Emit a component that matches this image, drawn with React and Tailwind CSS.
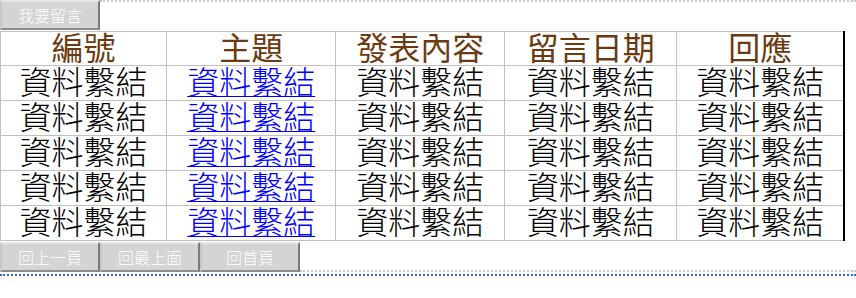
const font = { fontFamily: '"Liberation Serif", "Noto Sans CJK TC", serif' }

const headers = ['編號', '主題', '發表內容', '留言日期', '回應']
const widths = ['w-[166px]', 'w-[169px]', 'w-[169px]', 'w-[172px]', 'w-[167px]']
const rows = [1, 2, 3, 4, 5]

function GrayButton({ children }) {
  return (
    <button className="w-[100px] h-[30px] shrink-0 bg-[#d4d4d4] border-t-2 border-l-2 border-t-[#e6e6e6] border-l-[#c8c8c8] border-r-2 border-b-2 border-r-[#7a7a7a] border-b-[#8c8c8c] text-white flex items-center justify-center">
      <span className="text-[16px] leading-none" style={{ fontFamily: '"Noto Sans CJK TC", sans-serif' }}>{children}</span>
    </button>
  )
}

export default function App() {
  return (
    <div className="w-[856px] h-[298px] bg-white font-light" style={font}>
      {/* top bar */}
      <div className="flex">
        <GrayButton>我要留言</GrayButton>
        <div className="flex-1 border-t-2 border-dotted border-[#c8c8c8]" />
      </div>

      {/* table */}
      <table className="w-[845px] border-collapse border-r-2 border-r-black mt-[1px]">
        <thead>
          <tr className="h-[34px]">
            {headers.map((h, i) => (
              <th key={h} className={`${widths[i]} border border-[#c0c0c0] text-[32px] font-normal leading-none text-[#6b3a10] p-0`}>
                {h}
              </th>
            ))}
          </tr>
        </thead>
        <tbody>
          {rows.map(r => (
            <tr key={r} className="h-[35px]">
              {headers.map((h, i) => (
                <td key={h} className="border border-[#c0c0c0] text-center text-[32px] leading-none p-0">
                  {i === 1
                    ? <a href="#" className="text-[#0000ff] underline decoration-1 underline-offset-2">資料繫結</a>
                    : <span className="text-black">資料繫結</span>}
                </td>
              ))}
            </tr>
          ))}
        </tbody>
      </table>

      {/* bottom bar */}
      <div className="flex mt-[1px]">
        <GrayButton>回上一頁</GrayButton>
        <GrayButton>回最上面</GrayButton>
        <GrayButton>回首頁</GrayButton>
        <div className="flex-1 border-b-2 border-dotted border-[#c8c8c8]" />
      </div>
      <div className="mt-[2px] border-t-2 border-dotted border-[#3366cc]" />
    </div>
  )
}
